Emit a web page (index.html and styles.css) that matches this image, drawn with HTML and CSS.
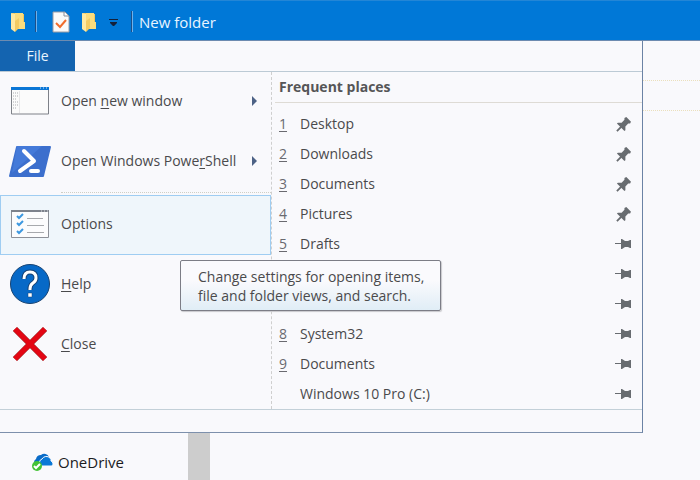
FILE: index.html
```
<!DOCTYPE html>
<html lang="en">
<head>
  <meta charset="UTF-8" />
  <meta name="viewport" content="width=device-width, initial-scale=1.0"/>
  <title>New folder</title>
  <link rel="stylesheet" href="styles.css">
</head>
<body>

  <!-- Shared icons -->
  <svg class="icon-defs" aria-hidden="true">
    <symbol id="folder" viewBox="0 0 14 20">
      <path d="M1 1h5v1h7v14h-8z" fill="#f3c75b"/>
      <path d="M4 1h8v9h2v7H4z" fill="#fbdc7d"/>
      <path d="M0 1l4 1v18l-4-3z" fill="#ffe9a2"/>
      <path d="M4 9l4-3v10l-4 4z" fill="#f3cb62"/>
    </symbol>
    <symbol id="pinned" viewBox="0 0 16 16">
      <path d="M1 15l6-6" stroke="#686c70" stroke-width="2"/>
      <path d="M9 1l2-1 5 5-1 2h-2l-3 3v4l-1 1-8-8 1-1h4l3-3z" fill="#686c70"/>
    </symbol>
    <symbol id="unpinned" viewBox="0 0 16 10">
      <path d="M0 4h7v1H0z" fill="#686c70"/>
      <path d="M6 0h1l3 2h3l2-1h1v8h-1l-2-1h-3l-3 2H6z" fill="#686c70"/>
    </symbol>
    <symbol id="arrow" viewBox="0 0 5 10">
      <path d="M0 0l5 5-5 5z" fill="#4d6285"/>
    </symbol>
  </svg>

  <header class="titlebar">
    <svg class="folder"><use href="#folder"/></svg>
    <span class="divider"></span>
    <button class="quick" aria-label="Properties">
      <svg width="16" height="20" viewBox="0 0 16 20">
        <path d="M0 0h12l4 4v16H0z" fill="#fafafa" stroke="#9b9ca4"/>
        <path d="M11 0v4h5" fill="none" stroke="#8a8f98"/>
        <path d="M3 11l4 4 6-7" fill="none" stroke="#f06c2c" stroke-width="2"/>
      </svg>
    </button>
    <button class="quick" aria-label="New folder"><svg class="folder"><use href="#folder"/></svg></button>
    <button class="quick" aria-label="Customize Quick Access Toolbar">
      <svg width="9" height="8" viewBox="0 0 9 8"><path d="M0 1h9v1H0zM1 4h7v1L5 8H4L1 5z" fill="#14213a"/></svg>
    </button>
    <span class="divider"></span>
    <h1>New folder</h1>
  </header>

  <div class="window">
    <aside class="sidebar">
      <a class="drive" href="#">
        <svg width="22" height="18" viewBox="0 0 22 18">
          <path d="M4 13a4 4 0 0 1 0-7a5 5 0 0 1 5-4a5 5 0 0 1 8 2l-3 2a5 5 0 0 0-6 4z" fill="#0a6cc8"/>
          <path d="M9 13a4 4 0 0 1 1-7a5 5 0 0 1 8-1a3 3 0 0 1 1 3a3 3 0 0 1 1 5z" fill="#0a78d6" stroke="#f9f9fc"/>
          <circle cx="5" cy="13" r="5" fill="#43c236"/>
          <path d="M2 13l2 2 4-4" fill="none" stroke="#fff" stroke-width="2"/>
        </svg>
        OneDrive
      </a>
      <div class="scrollbar"></div>
    </aside>
    <main class="content">
      <div class="band"></div>
    </main>

    <!-- File menu -->
    <div class="menu">
      <div class="tabs"><button class="tab">File</button></div>
      <div class="panes">
        <nav class="commands">
          <button class="command">
            <svg width="40" height="40" viewBox="0 0 40 40">
              <path d="M1.5 7h37v26h-37z" fill="#fbfbfb" stroke="#7e8188"/>
              <path d="M1 6h38v3H1z" fill="#0a76d6"/>
              <path d="M30 7h1m2 0h1m2 0h1" stroke="#cfe6fa"/>
              <path d="M3 12h5M3 15h6M3 18h4M3 21h6M3 24h5M3 27h4" stroke="#aaacb0" stroke-dasharray="1 1"/>
              <path d="M9.5 10v22" stroke="#e6e6e8"/>
            </svg>
            <span class="label">Open <u>n</u>ew window</span>
            <svg class="arrow"><use href="#arrow"/></svg>
          </button>
          <button class="command">
            <svg width="40" height="40" viewBox="0 0 40 40">
              <path d="M7 5h33q1 0 1 1l-7 29q0 1-1 1H0q-1 0-1-1L6 6q0-1 1-1z" fill="#3c6fcd"/>
              <path d="M7 5h25L2 32z" fill="#4c85e6" opacity=".5"/>
              <path d="M14 10l10 10L10 30M21 30h7" fill="none" stroke="#fff" stroke-width="4" stroke-linecap="round" stroke-linejoin="round"/>
            </svg>
            <span class="label">Open Windows Powe<u>r</u>Shell</span>
            <svg class="arrow"><use href="#arrow"/></svg>
          </button>
          <hr>
          <button class="command active" aria-describedby="tip">
            <svg width="40" height="40" viewBox="0 0 40 40">
              <path d="M1.5 6.5h37v27h-37z" fill="#fcfcfd" stroke="#8d9098"/>
              <path d="M1 6h38v2H1z" fill="#7d828c"/>
              <path d="M31 7h1m2 0h1m2 0h1" stroke="#dfe1e4"/>
              <path d="M7 12l2 2 4-4M7 19l2 2 4-4M7 27l2 2 4-4" fill="none" stroke="#3d98e0" stroke-width="2"/>
              <path d="M17 14.5h16M17 21.5h17M17 28.5h17" stroke="#a7a9ad"/>
            </svg>
            <span class="label">Options</span>
          </button>
          <button class="command">
            <svg width="40" height="40" viewBox="0 0 40 40">
              <circle cx="20" cy="20" r="19.5" fill="#0769c7" stroke="#174373"/>
              <path d="M14 15q0-7 6-7t6 6q0 3-3 5t-3 6v1" fill="none" stroke="#164377" stroke-width="5"/>
              <path d="M14 15q0-7 6-7t6 6q0 3-3 5t-3 6v1" fill="none" stroke="#fff" stroke-width="3"/>
              <path d="M18 29h4v4h-4z" fill="#fff" stroke="#164377" stroke-width=".5"/>
            </svg>
            <span class="label"><u>H</u>elp</span>
          </button>
          <button class="command">
            <svg width="40" height="40" viewBox="0 0 40 40">
              <path d="M5 5l30 30M35 5L5 35" stroke="#962626" stroke-width="6"/>
              <path d="M5 5l30 30M35 5L5 35" stroke="#e30613" stroke-width="5"/>
            </svg>
            <span class="label"><u>C</u>lose</span>
          </button>
        </nav>

        <section class="places">
          <h2>Frequent places</h2>
          <button class="place"><u>1</u><span class="label">Desktop</span><svg class="pin on"><use href="#pinned"/></svg></button>
          <button class="place"><u>2</u><span class="label">Downloads</span><svg class="pin on"><use href="#pinned"/></svg></button>
          <button class="place"><u>3</u><span class="label">Documents</span><svg class="pin on"><use href="#pinned"/></svg></button>
          <button class="place"><u>4</u><span class="label">Pictures</span><svg class="pin on"><use href="#pinned"/></svg></button>
          <button class="place"><u>5</u><span class="label">Drafts</span><svg class="pin"><use href="#unpinned"/></svg></button>
          <button class="place" aria-label="Place 6"><span class="label"></span><svg class="pin"><use href="#unpinned"/></svg></button>
          <button class="place" aria-label="Place 7"><span class="label"></span><svg class="pin"><use href="#unpinned"/></svg></button>
          <button class="place"><u>8</u><span class="label">System32</span><svg class="pin"><use href="#unpinned"/></svg></button>
          <button class="place"><u>9</u><span class="label">Documents</span><svg class="pin"><use href="#unpinned"/></svg></button>
          <button class="place"><u></u><span class="label">Windows 10 Pro (C:)</span><svg class="pin"><use href="#unpinned"/></svg></button>
        </section>
      </div>
      <div class="menu-footer"></div>
      <div class="tooltip" id="tip" role="tooltip">Change settings for opening items,<br>file and folder views, and search.</div>
    </div>
  </div>

</body>
</html>
```
FILE: styles.css
```
* {
  box-sizing: border-box;
}
body {
  margin: 0;
  min-height: 100vh;
  display: flex;
  flex-direction: column;
  background: #f9f9fc;
  color: #4a4a4c;
  font-family: "Open Sans", "Noto Sans", sans-serif;
  font-size: 14px;
  line-height: 20px;
}
button {
  padding: 0;
  border: 0;
  background: none;
  color: inherit;
  font: inherit;
  text-align: left;
}
svg {
  flex: none;
  overflow: visible;
}
u {
  text-underline-offset: 2px;
}
.icon-defs {
  position: absolute;
  width: 0;
  height: 0;
}

/* Title bar */
.titlebar {
  display: flex;
  align-items: center;
  height: 41px;
  padding: 2px 11px 0;
  background: #0078d7;
  border-top: 1px solid #2386d6;
  border-bottom: 1px solid #6d8bb0;
  color: #e9f5ff;
}
.titlebar h1 {
  margin: 0 0 0 6px;
  font-size: 15px;
  font-weight: 400;
}
.folder {
  display: block;
  width: 14px;
  height: 20px;
}
.divider {
  width: 2px;
  height: 21px;
  margin-left: 10px;
  border-left: 1px solid #1b4f8a;
  border-right: 1px solid #6fb1ea;
}
.quick {
  margin-left: 13px;
}
.quick svg {
  display: block;
}
.divider + .quick {
  margin-left: 16px;
}
.quick + .divider {
  margin-left: 13px;
}

/* Explorer window behind the menu */
.window {
  position: relative;
  flex: 1;
  display: flex;
}
.sidebar {
  display: flex;
  align-items: flex-end;
  width: 210px;
}
.drive {
  flex: 1;
  display: flex;
  align-items: center;
  gap: 4px;
  padding: 0 0 8px 32px;
  color: #1c1c1e;
  font-size: 15px;
  text-decoration: none;
}
.scrollbar {
  align-self: stretch;
  width: 22px;
  background: #cdcdcd;
}
.content {
  flex: 1;
  padding-top: 39px;
}
.band {
  height: 31px;
  border-top: 1px dotted #eadfbc;
  border-bottom: 1px dotted #eadfbc;
}

/* File menu */
.menu {
  position: absolute;
  top: 0;
  left: 0;
  right: 57px;
  background: #f9f9fc;
  border-right: 1px solid #6b83a5;
  border-bottom: 1px solid #7d90ac;
}
.tabs {
  display: flex;
  border-bottom: 1px solid #bccad5;
}
.tab {
  width: 75px;
  height: 30px;
  background: #1464b0;
  color: #e9f5ff;
  text-align: center;
}
.panes {
  display: flex;
}
.commands {
  flex: none;
  width: 272px;
  border-right: 1px dashed #cfcfcf;
}
.command {
  display: flex;
  align-items: center;
  gap: 11px;
  width: 100%;
  height: 60px;
  padding: 0 13px 2px 9px;
  border: 1px solid transparent;
}
.command.active {
  background: #eff6fb;
  border-color: #9fcdf2;
}
.commands hr {
  height: 3px;
  margin: 0 0 0 61px;
  border: 0;
  border-top: 1px dotted #cfcfc6;
}
.label {
  flex: 1;
}
.arrow {
  width: 5px;
  height: 10px;
}
.places {
  flex: 1;
}
.places h2 {
  margin: 0 0 6px 3px;
  padding: 5px 4px;
  border-bottom: 1px solid #dedbd5;
  color: #555557;
  font-size: 14px;
  font-weight: 700;
}
.place {
  display: flex;
  align-items: center;
  gap: 12px;
  width: 100%;
  height: 30px;
  padding: 0 11px 0 7px;
}
.place u {
  width: 9px;
  color: #6a6a70;
}
.pin {
  width: 16px;
  height: 10px;
}
.pin.on {
  width: 15px;
  height: 15px;
}
.menu-footer {
  height: 23px;
  border-top: 1px solid #c3d0d8;
}
.tooltip {
  position: absolute;
  top: 219px;
  left: 180px;
  padding: 6px 16px 5px 17px;
  background: linear-gradient(#fafafd 40%, #e0edf6);
  border: 1px solid #7c7d86;
  border-radius: 2px;
  box-shadow: 1px 1px 1px #c8c8cc;
  line-height: 19px;
  white-space: nowrap;
}
```
